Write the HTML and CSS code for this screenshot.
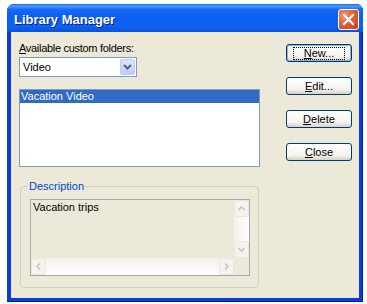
FILE: index.html
```html
<!DOCTYPE html>
<html lang="en">
<head>
  <meta charset="UTF-8">
  <title>Library Manager</title>
  <link rel="stylesheet" href="styles.css">
</head>
<body>
  <div class="window">
    <div class="titlebar">
      <span class="title">Library Manager</span>
      <span class="close">
        <svg width="13" height="13" viewBox="0 0 13 13"><path d="M2 2 L11 11 M11 2 L2 11" stroke="#fff" stroke-width="2.2" stroke-linecap="square"/></svg>
      </span>
    </div>
    <div class="content">
      <div class="left">
        <div class="label"><u>A</u>vailable custom folders:</div>
        <div class="combo">
          <span class="combo-text">Video</span>
          <span class="combo-btn">
            <svg width="9" height="6" viewBox="0 0 9 6"><path d="M1 1 L4.5 4.5 L8 1" fill="none" stroke="#4d6185" stroke-width="2"/></svg>
          </span>
        </div>
        <div class="listbox">
          <div class="item selected">Vacation Video</div>
        </div>
        <fieldset class="group">
          <legend>Description</legend>
          <div class="edit">
            <div class="edit-main">
              <div class="edit-text">Vacation trips</div>
              <div class="vscroll">
                <span class="sbtn">
                  <svg width="7" height="5" viewBox="0 0 7 5"><path d="M0.5 4 L3.5 1 L6.5 4" fill="none" stroke="#c3c3c3" stroke-width="1.5"/></svg>
                </span>
                <span class="strack"></span>
                <span class="sbtn">
                  <svg width="7" height="5" viewBox="0 0 7 5"><path d="M0.5 1 L3.5 4 L6.5 1" fill="none" stroke="#c3c3c3" stroke-width="1.5"/></svg>
                </span>
              </div>
            </div>
            <div class="hscroll">
              <span class="sbtn">
                <svg width="5" height="7" viewBox="0 0 5 7"><path d="M4 0.5 L1 3.5 L4 6.5" fill="none" stroke="#c3c3c3" stroke-width="1.5"/></svg>
              </span>
              <span class="strack"></span>
              <span class="sbtn">
                <svg width="5" height="7" viewBox="0 0 5 7"><path d="M1 0.5 L4 3.5 L1 6.5" fill="none" stroke="#c3c3c3" stroke-width="1.5"/></svg>
              </span>
              <span class="corner"></span>
            </div>
          </div>
        </fieldset>
      </div>
      <div class="buttons">
        <button class="btn default"><span class="focus"><u>N</u>ew...</span></button>
        <button class="btn"><u>E</u>dit...</button>
        <button class="btn"><u>D</u>elete</button>
        <button class="btn"><u>C</u>lose</button>
      </div>
    </div>
  </div>
</body>
</html>
```

FILE: styles.css
```css
body {
  margin: 0;
  background: #fff;
  font-family: "Liberation Sans", Arial, sans-serif;
  font-size: 11px;
  color: #000;
}
.window {
  margin: 4px 0 0 7px;
  width: 348px;
  height: 294px;
  padding: 0 4px 4px 4px;
  background: #0b3bd9;
  border-radius: 7px 7px 0 0;
  display: flex;
  flex-direction: column;
  box-shadow: inset 0 -1px 0 #001ea0, inset -1px 0 0 #001ea0;
}
.titlebar {
  height: 28px;
  margin: 0 -4px;
  padding: 0 4px 0 7px;
  border-radius: 7px 7px 0 0;
  background: linear-gradient(#1c6cf4 0%, #4a9cff 8%, #1569f5 20%, #0a5ef0 50%, #0d62f0 80%, #0b52dc 100%);
  display: flex;
  align-items: center;
  justify-content: space-between;
}
.title {
  color: #fff;
  font-weight: bold;
  font-size: 13px;
  text-shadow: 1px 1px 0 #0a1f80;
  padding-top: 2px;
}
.close {
  width: 19px;
  height: 19px;
  margin-top: 3px;
  border: 1px solid #fff;
  border-radius: 3px;
  background: radial-gradient(circle at 30% 30%, #f39b7c 0%, #e35d35 45%, #c8401c 100%);
  display: flex;
  align-items: center;
  justify-content: center;
}
.content {
  flex: 1;
  background: #ece9d8;
  display: flex;
  padding: 10px 7px 0 8px;
}
.left {
  width: 241px;
}
.label {
  line-height: 13px;
  letter-spacing: -0.3px;
}
.combo {
  margin-top: 2px;
  width: 112px;
  height: 18px;
  border: 1px solid #7f9db9;
  background: #fff;
  display: flex;
  align-items: center;
  justify-content: space-between;
  padding: 0 1px 0 3px;
}
.combo-btn {
  width: 15px;
  height: 16px;
  border-radius: 2px;
  background: linear-gradient(#dce6fd, #b9cdf8);
  border: 1px solid #bccdf5;
  box-sizing: border-box;
  display: flex;
  align-items: center;
  justify-content: center;
}
.listbox {
  margin-top: 12px;
  height: 76px;
  border: 1px solid #7f9db9;
  background: #fff;
}
.item {
  line-height: 13px;
  padding-left: 1px;
}
.selected {
  background: #316ac5;
  color: #fff;
}
.group {
  margin: 14px 1px 0 1px;
  padding: 8px 8px 11px 9px;
  border: 1px solid #d0d0bf;
  border-radius: 4px;
}
.group legend {
  color: #0046d5;
  padding: 0 1px;
  margin-left: -2px;
  line-height: 10px;
}
.edit {
  height: 75px;
  border: 1px solid #a7a6aa;
  display: flex;
  flex-direction: column;
}
.edit-main {
  flex: 1;
  display: flex;
}
.edit-text {
  flex: 1;
  padding: 1px 2px;
}
.vscroll {
  width: 15px;
  display: flex;
  flex-direction: column;
  background: linear-gradient(90deg, #f3f1ec, #fefefe);
}
.hscroll {
  height: 17px;
  display: flex;
  background: linear-gradient(#f3f1ec, #fefefe);
}
.strack {
  flex: 1;
}
.sbtn {
  width: 15px;
  height: 17px;
  box-sizing: border-box;
  border: 1px solid #e8e8e0;
  border-radius: 2px;
  background: #f4f3ee;
  display: flex;
  align-items: center;
  justify-content: center;
}
.corner {
  width: 15px;
  background: #ece9d8;
}
.buttons {
  margin-left: 26px;
  margin-top: 2px;
  display: flex;
  flex-direction: column;
  gap: 15px;
}
.btn {
  width: 66px;
  height: 18px;
  padding: 0;
  font-family: inherit;
  font-size: 11px;
  color: #000;
  border: 1px solid #003c74;
  border-radius: 3px;
  background: linear-gradient(#ffffff 0%, #f5f4ef 70%, #d6d0c5 100%);
}
.default {
  box-shadow: inset 0 0 0 1px #8fb2ea;
}
.focus {
  display: inline-block;
  padding: 0 10px;
  outline: 1px dotted #000;
  line-height: 11px;
}
```
